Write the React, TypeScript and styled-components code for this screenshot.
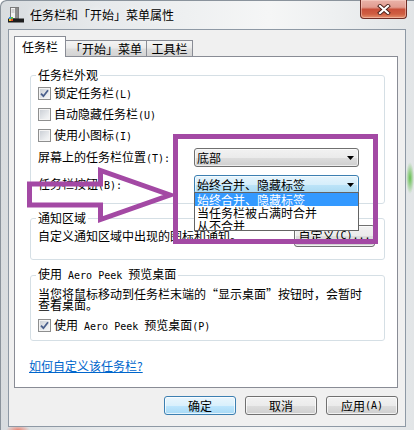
import React from "react";
import styled, { createGlobalStyle } from "styled-components";

const GlobalStyle = createGlobalStyle`
  html, body { margin: 0; padding: 0; background: #ffffff; }
  body {
    font-family: "Noto Sans CJK SC", "Noto Sans", sans-serif;
    font-size: 12px;
    color: #000;
  }
  * { box-sizing: border-box; }
`;

const Window = styled.div`
  position: relative;
  width: 414px;
  height: 430px;
  overflow: hidden;
  display: flex;
  flex-direction: column;
  border-top-left-radius: 6px;
  box-shadow: inset 1px 1px 0 #8a939c;
  background:
    radial-gradient(ellipse 4px 16px at 410px 178px, rgba(96, 190, 72, 0.95), rgba(96, 190, 72, 0) 100%),
    radial-gradient(ellipse 12px 5px at 18px 430px, rgba(238, 120, 100, 0.85), rgba(238, 120, 100, 0) 100%),
    linear-gradient(to right, #d8dcdf 0%, #e7eaec 25%, #f5f6f6 65%, #eef0f1 80%, #e2e5e7 100%);
`;

const TitleBar = styled.div`
  height: 29px;
  flex-shrink: 0;
  display: flex;
  align-items: flex-start;
  padding: 0 7px 0 8px;
`;

const IconSvg = styled.svg`
  width: 16px;
  height: 16px;
  margin-top: 7px;
  flex-shrink: 0;
`;

const TitleText = styled.div`
  margin-left: 6px;
  margin-top: 7px;
  line-height: 16px;
  font-size: 12px;
  color: #000;
  text-shadow: 0 0 6px rgba(255, 255, 255, 0.9);
`;

const CloseButton = styled.div`
  margin-left: auto;
  width: 47px;
  height: 19px;
  border: 1px solid #6e2c25;
  border-top: none;
  border-radius: 0 0 4px 4px;
  background: linear-gradient(
    to bottom,
    #eab3a9 0%,
    #e29c90 40%,
    #c9503b 52%,
    #cf5e42 78%,
    #e5916e 100%
  );
  box-shadow: inset 0 0 0 1px rgba(255, 220, 210, 0.45);
  display: flex;
  align-items: center;
  justify-content: center;
`;

const Body = styled.div`
  margin: 0 8px 3px;
  flex: 1;
  border: 1px solid #8e99a5;
  background: #f0f0f0;
  display: flex;
  flex-direction: column;
  padding: 6px 7px 11px 5px;
`;

const TabStrip = styled.div`
  height: 20px;
  display: flex;
  align-items: flex-end;
  flex-shrink: 0;
`;

const Tab = styled.div<{ $active?: boolean; $w: number }>`
  width: ${(p) => p.$w}px;
  height: ${(p) => (p.$active ? 21 : 16)}px;
  margin-bottom: ${(p) => (p.$active ? -1 : 0)}px;
  position: relative;
  z-index: ${(p) => (p.$active ? 1 : 0)};
  border: 1px solid #898c95;
  border-bottom: none;
  border-left-width: ${(p) => (p.$active ? 1 : 0)}px;
  padding-top: ${(p) => (p.$active ? 3 : 1)}px;
  line-height: 14px;
  text-align: center;
  font-size: 12px;
  background: ${(p) =>
    p.$active
      ? "#ffffff"
      : "linear-gradient(to bottom, #f4f4f4 0%, #ebebeb 45%, #dddddd 55%, #d3d3d3 100%)"};
`;

const Panel = styled.div`
  flex: 1;
  background: #ffffff;
  border: 1px solid #898c95;
  display: flex;
  flex-direction: column;
  padding: 11px 12px 0 15px;
`;

const Group = styled.fieldset<{ $top?: number }>`
  margin: ${(p) => p.$top ?? 0}px 0 0 0;
  padding: 0 9px ${(p) => 0}px 7px;
  border: 1px solid #d5dfe5;
  border-radius: 3px;
  min-width: 0;
`;

const GroupLabel = styled.legend`
  margin-left: -2px;
  padding: 0 2px;
  line-height: 14px;
  font-size: 12px;
`;

const CheckList = styled.div`
  display: flex;
  flex-direction: column;
  padding-top: 1px;
`;

const CheckRow = styled.div<{ $top?: number }>`
  height: 21px;
  margin-top: ${(p) => p.$top ?? 0}px;
  display: flex;
  align-items: center;
  gap: 3px;
  line-height: 14px;
`;

const Box = styled.span`
  width: 13px;
  height: 13px;
  flex-shrink: 0;
  border: 1px solid #8e8f8f;
  background: linear-gradient(135deg, #c7ccd3 0%, #eceef0 70%, #f8f8f8 100%);
  box-shadow: inset 0 0 0 1px #f4f4f4;
  display: flex;
  align-items: center;
  justify-content: center;
`;

const Mono = styled.span`
  font-family: "DejaVu Sans Mono", "Liberation Mono", monospace;
  font-size: 10px;
  white-space: pre;
`;

const SelectRow = styled.div<{ $top: number }>`
  height: 19px;
  margin-top: ${(p) => p.$top}px;
  display: flex;
  align-items: center;
  line-height: 14px;
`;

const RowLabel = styled.div`
  width: 156px;
  flex-shrink: 0;
  white-space: nowrap;
`;

const Combo = styled.div<{ $focused?: boolean }>`
  position: relative;
  width: 165px;
  height: 19px;
  border: 1px solid ${(p) => (p.$focused ? "#3c7fb1" : "#707070")};
  border-radius: 3px;
  background: ${(p) =>
    p.$focused
      ? "linear-gradient(to bottom, #e5f4fc 0%, #d6eefb 50%, #bde4f8 52%, #a9d9f3 100%)"
      : "linear-gradient(to bottom, #f2f2f2 0%, #ebebeb 50%, #dddddd 52%, #cfcfcf 100%)"};
  box-shadow: inset 0 0 0 1px rgba(255, 255, 255, 0.6);
  display: flex;
  align-items: center;
  padding: 0 4px 0 2px;
  line-height: 17px;
`;

const ComboText = styled.span`
  flex: 1;
  white-space: nowrap;
`;

const ListBox = styled.div`
  position: absolute;
  left: -1px;
  top: calc(100% - 1px);
  width: 165px;
  height: 39px;
  border: 1px solid #646464;
  background: #ffffff;
  overflow: hidden;
  z-index: 3;
`;

const ListItem = styled.div<{ $active?: boolean }>`
  height: 13px;
  line-height: 13px;
  padding-left: 2px;
  white-space: nowrap;
  background: ${(p) => (p.$active ? "#3399ff" : "transparent")};
  color: ${(p) => (p.$active ? "#ffffff" : "#000000")};
`;

const NotifyRow = styled.div`
  height: 22px;
  display: flex;
  align-items: center;
  justify-content: space-between;
  margin-bottom: 12px;
  line-height: 14px;
`;

const PushButton = styled.div<{ $primary?: boolean; $w: number; $h: number }>`
  width: ${(p) => p.$w}px;
  height: ${(p) => p.$h}px;
  flex-shrink: 0;
  border: 1px solid ${(p) => (p.$primary ? "#3c7fb1" : "#707070")};
  border-radius: 3px;
  background: ${(p) =>
    p.$primary
      ? "linear-gradient(to bottom, #eaf6fd 0%, #d9f0fc 50%, #bee6fd 52%, #a7d9f5 100%)"
      : "linear-gradient(to bottom, #f2f2f2 0%, #ebebeb 50%, #dddddd 52%, #cfcfcf 100%)"};
  box-shadow: inset 0 0 0 1px rgba(255, 255, 255, 0.7);
  display: flex;
  align-items: center;
  justify-content: center;
  font-size: 12px;
  line-height: 14px;
  white-space: nowrap;
`;

const Para = styled.div`
  margin-top: 5px;
  line-height: 11px;
  white-space: nowrap;
`;

const HelpLink = styled.a`
  margin-top: 18px;
  margin-left: -1px;
  align-self: flex-start;
  line-height: 14px;
  color: #0066cc;
  text-decoration: underline;
  cursor: pointer;
`;

const ButtonRow = styled.div`
  margin-top: 8px;
  height: 19px;
  flex-shrink: 0;
  display: flex;
  justify-content: flex-end;
  gap: 9px;
`;

const MarkRect = styled.div`
  position: absolute;
  left: 173px;
  top: 134px;
  width: 205px;
  height: 110px;
  border: 5px solid #a349a4;
  pointer-events: none;
  z-index: 5;
`;

const ArrowSvg = styled.svg`
  position: absolute;
  left: 20px;
  top: 160px;
  width: 165px;
  height: 70px;
  pointer-events: none;
  z-index: 5;
`;

function AppIcon() {
  return (
    <IconSvg viewBox="0 0 16 16">
      <rect x="2.5" y="0.5" width="8" height="11" fill="#f2f2f2" stroke="#7a7a7a" />
      <rect x="7" y="1" width="3" height="10" fill="#8c8c8c" />
      <line x1="3.5" y1="3" x2="6.5" y2="3" stroke="#b0b0b0" />
      <line x1="3.5" y1="5" x2="6.5" y2="5" stroke="#b0b0b0" />
      <rect x="0" y="11.5" width="16" height="4" fill="#1e1e1e" />
      <rect x="1" y="10" width="2" height="2" fill="#3a8fe0" />
      <rect x="3" y="10" width="2" height="2" fill="#5fbf3a" />
      <rect x="1" y="12" width="2" height="2" fill="#f0c020" />
      <rect x="3" y="12" width="2" height="2" fill="#e04a2a" />
    </IconSvg>
  );
}

function CloseGlyph() {
  return (
    <svg width="14" height="11" viewBox="0 0 14 11">
      <path d="M3 2 L11 9 M11 2 L3 9" stroke="#4b2019" strokeWidth="4" strokeLinecap="square" />
      <path d="M3 2 L11 9 M11 2 L3 9" stroke="#ffffff" strokeWidth="2.2" strokeLinecap="square" />
    </svg>
  );
}

function CheckBox({ checked }: { checked?: boolean }) {
  return (
    <Box>
      {checked && (
        <svg width="9" height="9" viewBox="0 0 9 9">
          <path d="M1 4.6 L3.4 7.2 L8 1.2" fill="none" stroke="#4a5f8c" strokeWidth="1.8" />
        </svg>
      )}
    </Box>
  );
}

function DropArrow() {
  return (
    <svg width="7" height="4" viewBox="0 0 7 4">
      <path d="M0 0 L7 0 L3.5 4 Z" fill="#000" />
    </svg>
  );
}

export default function App() {
  return (
    <>
      <GlobalStyle />
      <Window>
        <TitleBar>
          <AppIcon />
          <TitleText>任务栏和「开始」菜单属性</TitleText>
          <CloseButton>
            <CloseGlyph />
          </CloseButton>
        </TitleBar>
        <Body>
          <TabStrip>
            <Tab $active $w={52}>任务栏</Tab>
            <Tab $w={81}>「开始」菜单</Tab>
            <Tab $w={46}>工具栏</Tab>
          </TabStrip>
          <Panel>
            <Group style={{ paddingBottom: 9 }}>
              <GroupLabel>任务栏外观</GroupLabel>
              <CheckList>
                <CheckRow>
                  <CheckBox checked />
                  <span>锁定任务栏<Mono>(L)</Mono></span>
                </CheckRow>
                <CheckRow>
                  <CheckBox />
                  <span>自动隐藏任务栏<Mono>(U)</Mono></span>
                </CheckRow>
                <CheckRow>
                  <CheckBox />
                  <span>使用小图标<Mono>(I)</Mono></span>
                </CheckRow>
              </CheckList>
              <SelectRow $top={2}>
                <RowLabel>屏幕上的任务栏位置<Mono>(T):</Mono></RowLabel>
                <Combo>
                  <ComboText>底部</ComboText>
                  <DropArrow />
                </Combo>
              </SelectRow>
              <SelectRow $top={8}>
                <RowLabel>任务栏按钮<Mono>(B):</Mono></RowLabel>
                <Combo $focused>
                  <ComboText>始终合并、隐藏标签</ComboText>
                  <DropArrow />
                  <ListBox>
                    <ListItem $active>始终合并、隐藏标签</ListItem>
                    <ListItem>当任务栏被占满时合并</ListItem>
                    <ListItem>从不合并</ListItem>
                  </ListBox>
                </Combo>
              </SelectRow>
            </Group>
            <Group $top={7}>
              <GroupLabel>通知区域</GroupLabel>
              <NotifyRow>
                <span>自定义通知区域中出现的图标和通知。</span>
                <PushButton $w={81} $h={22}>
                  自定义<Mono>(C)...</Mono>
                </PushButton>
              </NotifyRow>
            </Group>
            <Group $top={7} style={{ paddingBottom: 4 }}>
              <GroupLabel>
                使用<Mono> Aero Peek </Mono>预览桌面
              </GroupLabel>
              <Para>
                当您将鼠标移动到任务栏末端的“显示桌面”按钮时，会暂时
                <br />
                查看桌面。
              </Para>
              <CheckRow $top={5}>
                <CheckBox checked />
                <span>
                  使用<Mono> Aero Peek </Mono>预览桌面<Mono>(P)</Mono>
                </span>
              </CheckRow>
            </Group>
            <HelpLink>如何自定义该任务栏?</HelpLink>
          </Panel>
          <ButtonRow>
            <PushButton $primary $w={72} $h={19}>确定</PushButton>
            <PushButton $w={72} $h={19}>取消</PushButton>
            <PushButton $w={72} $h={19}>
              应用<Mono>(A)</Mono>
            </PushButton>
          </ButtonRow>
        </Body>
        <MarkRect />
        <ArrowSvg viewBox="0 0 165 70">
          <polygon
            points="9.5,24 80.5,24 80.5,10.5 150,35 80.5,59.5 80.5,45 9.5,45"
            fill="none"
            stroke="#a349a4"
            strokeWidth="5"
            strokeLinejoin="miter"
          />
        </ArrowSvg>
      </Window>
    </>
  );
}
